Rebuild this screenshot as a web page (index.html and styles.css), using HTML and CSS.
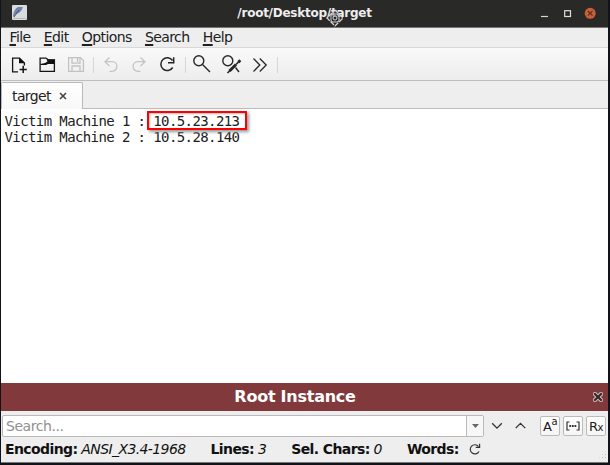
FILE: index.html
```html
<!DOCTYPE html>
<html lang="en">
<head>
<meta charset="utf-8">
<title>/root/Desktop/target</title>
<link rel="stylesheet" href="styles.css">
</head>
<body>
<div class="window">
  <header class="titlebar">
    <svg class="app-icon" width="15" height="15" viewBox="0 0 15 15"><rect width="15" height="15" rx="1" fill="#d9dcdf"/><path d="M1 11Q2 4 6 2L11 2Q9 8 4 9L2 12Z" fill="#7183aa"/><path d="M2 12L7 5" stroke="#445572"/><path d="M1 13.5H14" stroke="#b8b8b4"/></svg>
    <h1 class="title">/root/Desktop/target</h1>
    <svg class="controls" width="56" height="14" viewBox="0 0 56 14"><path d="M1 10.5H8" stroke="#d5d5d1" stroke-width="1.2"/><rect x="24.7" y="4.7" width="5.8" height="5.8" fill="none" stroke="#dededa" stroke-width="1.2"/><circle cx="50.2" cy="7.3" r="5.5" fill="#c95f37"/><path d="M47.9 5L52.5 9.6M52.5 5L47.9 9.6" stroke="#572e20" stroke-width="1.1"/></svg>
    <svg class="cursor" width="18" height="18" viewBox="0 0 18 18"><path d="M9 1L17 9L9 17L1 9Z" fill="#292928" fill-opacity=".45" stroke="#d8d8d8" stroke-width="1.2" stroke-dasharray="5 1"/><rect x="5" y="5" width="8" height="8" rx="2" fill="none" stroke="#d8d8d8"/><circle cx="9" cy="9" r="2" fill="#222" stroke="#ddd"/></svg>
  </header>
  <nav class="menu"><span><u>F</u>ile</span><span><u>E</u>dit</span><span><u>O</u>ptions</span><span><u>S</u>earch</span><span><u>H</u>elp</span></nav>
  <div class="toolbar">
    <svg width="270" height="31" viewBox="0 0 270 31" fill="none">
      <g stroke="#151515" stroke-width="1.3">
        <path d="M17 23.9H11.6V10.1H18.5L23.4 15V17.5"/><path d="M18 9.5V15.3H24Z" fill="#111" stroke="none"/><path d="M22.2 17.8V25M18.6 21.4H25.8" stroke-width="1.5"/>
        <path d="M39.1 23.4V10.1H45L47.5 12H53.4V23.4Z"/><path d="M45.5 11.5H54V16H47L45 17H39.5V16L44 15L46.5 13.5Z" fill="#111" stroke="none"/>
      </g>
      <g stroke="#c2c2c2" stroke-width="1.3"><path d="M67.6 9.6H79.5L82.4 12.5V23.4H67.6Z"/><path d="M71 10V15.2H79V10M71 23V18H79V23M76.5 10V14"/></g>
      <path d="M92.5 9V25M184.5 9V25" stroke="#d5d5d5"/>
      <g stroke="#c4c4c4" stroke-width="1.3"><path d="M108.5 9.5L104 13.7L108.5 18M104.5 13.7H111C117.5 13.7 117.5 23.3 111 23.3H108.5"/><path d="M139.5 9.5L144 13.7L139.5 18M143.5 13.7H137C130.5 13.7 130.5 23.3 137 23.3H139.5"/></g>
      <path d="M171.5 12.5A6.4 6.4 0 1 0 171.7 19.5M172.7 9.3V14.7H167" stroke="#242424" stroke-width="1.5"/>
      <g stroke="#282828" stroke-width="1.4"><circle cx="197.8" cy="12.8" r="5"/><path d="M201.5 16.5L209 24"/><circle cx="226.8" cy="12.8" r="5"/><path d="M234.5 19.5L238 24"/><path d="M228.5 23L235 16.5" stroke-width="3"/><path d="M226.5 25L231 20.5M235 16.5L239 12.5" stroke-width="1.7"/><path d="M237.3 14.2L239.3 12.2" stroke-width="2.8"/></g>
      <path d="M252.5 10.5L258.8 17L252.5 23.5M258.8 10.5L265.2 17L258.8 23.5" stroke="#282828" stroke-width="1.3"/>
    </svg>
    <i class="rule"></i>
  </div>
  <div class="tabs"><div class="tab">target<svg width="8" height="8" viewBox="0 0 8 8"><path d="M1 1L7 7M7 1L1 7" stroke="#444" stroke-width="1.6"/></svg></div></div>
  <main class="editor"><div>Victim Machine 1 : <span class="mark">10.5.23.213</span></div><div>Victim Machine 2 : 10.5.28.140</div></main>
  <div class="banner"><strong>Root Instance</strong><svg width="10" height="10" viewBox="0 0 10 10"><path d="M2 2L8 8M8 2L2 8" stroke="#d1bebe" stroke-width="4.2" stroke-linecap="square"/><path d="M2 2L8 8M8 2L2 8" stroke="#35282a" stroke-width="2.2" stroke-linecap="square"/></svg></div>
  <div class="find">
    <div class="field"><span>Search...</span><b class="drop"><svg width="7" height="4" viewBox="0 0 7 4"><path d="M0 0H7L3.5 4Z" fill="#686868"/></svg></b></div>
    <svg class="arrows" width="38" height="12" viewBox="0 0 38 12"><path d="M1.2 3.3L6 8.1L10.8 3.3M24.7 8.1L29.5 3.3L34.3 8.1" fill="none" stroke="#333" stroke-width="1.3"/></svg>
    <div class="buttons"><span class="button">A<sup>a</sup></span><span class="button"><svg width="14" height="10" viewBox="0 0 14 10" fill="none" stroke="#333" stroke-width="1.2"><path d="M3.5 1H1V9H3.5M10.5 1H13V9H10.5"/><path d="M3.3 5H11" stroke-width="1.8" stroke-dasharray="1.8 .8"/></svg></span><span class="button">R<sub>x</sub></span></div>
  </div>
  <footer class="status"><span><b>Encoding:</b> <em>ANSI_X3.4-1968</em></span><span><b>Lines:</b> <em>3</em></span><span><b>Sel. Chars:</b> <em>0</em></span><span><b>Words:</b></span><svg class="reload" width="12" height="12" viewBox="0 0 12 12"><path d="M9.5 3.5A4.6 4.6 0 1 0 10 8.4M10.6 .8V4.4H6.8" fill="none" stroke="#333" stroke-width="1.2"/></svg><i class="grip"></i></footer>
</div>
</body>
</html>
```
FILE: styles.css
```css
*, *::after { box-sizing: border-box; }
body { margin: 0; width: 610px; height: 465px; overflow: hidden; background: #11121a; font: 14px "DejaVu Sans", sans-serif; letter-spacing: -.6px; color: #202020; }
.window { width: 607px; height: 463px; margin-left: 1px; background: #eee; display: flex; flex-direction: column; border-bottom: 1px solid #777; white-space: nowrap; }
.window > * { flex: none; }
.titlebar { height: 28px; background: #292928; position: relative; display: flex; align-items: center; border-bottom: 1px solid #777; padding: 0 11px; }
.app-icon { margin-top: -2px; }
.title { margin: -2px 0 0; flex: 1; text-align: center; color: #eee; font-size: 12px; letter-spacing: -.25px; line-height: 18px; padding-left: 41px; }
.controls { margin: -2px 1px 0 -1px; }
.cursor { position: absolute; left: 325px; top: 9px; }
.menu { display: flex; height: 20px; gap: 13.3px; padding-left: 8.5px; line-height: 19px; border-bottom: 1px solid #d8d8d8; }
.menu u { text-underline-offset: 2px; text-decoration-thickness: 1.5px; }
.toolbar { height: 32px; background: linear-gradient(#f9f9f9, #ededed); display: flex; }
.toolbar svg { flex: none; }
.rule { width: 1px; height: 16px; margin: 9px 0 0 6px; background: #d5d5d5; }
.tabs { height: 29px; border-top: 1px solid #bebebe; border-bottom: 1px solid #bbb; padding-top: 1px; }
.tab { height: 27px; width: 82px; background: linear-gradient(#fff, #f8f8f8); border: 1px solid #b9b9b9; border-bottom: 0; border-radius: 2px 2px 0 0; display: flex; align-items: center; gap: 8px; padding: 0 0 1px 10px; }
.editor { height: 274px; background: #fff; padding: 4px 0 0 3.5px; font: 14px/16px "DejaVu Sans Mono", monospace; white-space: pre; }
.mark { position: relative; }
.mark::after { content: ""; position: absolute; left: -6px; top: -2px; width: 100px; height: 19px; border: 2px solid #f00; box-shadow: 2px 2px 3px #999, inset 1px 1px 2px #bbb; }
.banner { height: 28px; background: #82393b; color: #fff; display: flex; align-items: center; padding-right: 5px; }
.banner strong { flex: 1; font-size: 16px; letter-spacing: -.25px; text-align: center; padding-right: 4px; line-height: 26px; }
.find { height: 29px; display: flex; align-items: center; padding: 1px 2px 0 1px; }
.field { width: 482px; height: 22px; background: #fff; border: 1px solid #b9b9b9; border-radius: 2px; display: flex; justify-content: space-between; color: #909090; line-height: 20px; padding-left: 3px; letter-spacing: -.45px; }
.drop { width: 17px; border-left: 1px solid #bbb; background: #f7f7f7; display: grid; place-items: center; }
.arrows { margin-left: 7px; }
.buttons { margin-left: auto; display: flex; gap: 3px; }
.button { width: 20px; height: 20px; display: flex; align-items: center; justify-content: center; border: 1px solid #bbb; border-radius: 2px; background: linear-gradient(#fff, #f5f5f5); font-size: 13px; }
.button sup, .button sub { font-size: 10px; line-height: 8px; }
.button sup { margin-top: -8px; }
.button sub { margin-top: 4px; }
.status { height: 22px; display: flex; padding-left: 4px; line-height: 18px; color: #111; }
.status span + span { margin-left: 25px; }
.reload { margin: 3px 0 0 10px; }
.grip { width: 9px; height: 9px; margin: 10px 1px 0 auto; background: radial-gradient(circle, #bbb 0.6px, transparent 1px) 0 0 / 3px 3px; clip-path: polygon(100% 0, 100% 100%, 0 100%); }
```
